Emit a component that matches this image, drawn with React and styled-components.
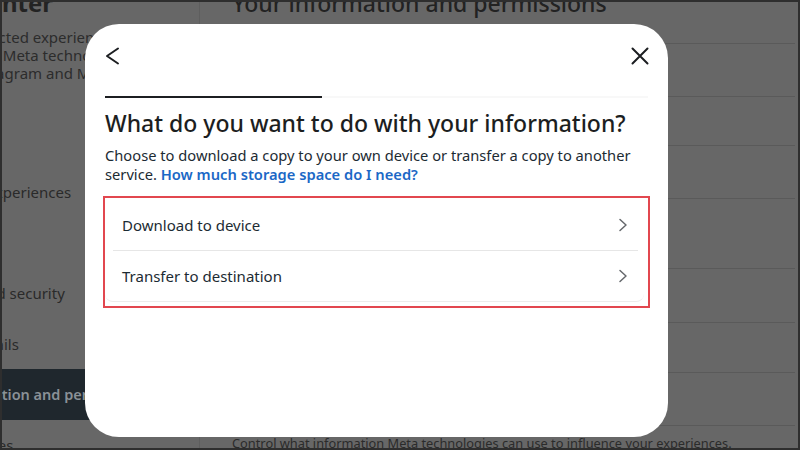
import React from "react";
import styled, { createGlobalStyle } from "styled-components";

const Global = createGlobalStyle`
  html, body { margin: 0; padding: 0; }
  body { width: 800px; height: 450px; overflow: hidden; font-family: "Noto Sans", "Open Sans", sans-serif; }
  * { box-sizing: border-box; }
`;

const Frame = styled.div`
  position: relative;
  width: 800px;
  height: 450px;
  overflow: hidden;
  background: #676767;
  border: 2px solid #2e2e2e;
`;

const Page = styled.div`
  display: grid;
  grid-template-columns: 198px 1fr;
  margin-top: -14px;
  color: #262626;
`;

const Sidebar = styled.aside`
  overflow: hidden;
  border-right: 1px solid #5e5e5e;
  height: 480px;
`;

const SideInner = styled.div`
  margin-left: -146px;
  width: 340px;
`;

const SideTitle = styled.h1`
  margin: 0;
  font-size: 24px;
  line-height: 30px;
  font-weight: 700;
  color: #232323;
`;

const SideDesc = styled.p`
  margin: 10px 0 0 38px;
  font-size: 15px;
  line-height: 18px;
  color: #2c2c2c;
  white-space: nowrap;
`;

const Menu = styled.nav`
  margin-top: 34px;
  display: flex;
  flex-direction: column;
`;

const MenuItem = styled.div`
  height: 50.6px;
  display: flex;
  align-items: center;
  padding-left: ${(p) => (p.$header ? "0" : p.$active ? "53px" : "51px")};
  font-size: ${(p) => (p.$header ? "13px" : p.$active ? "14.5px" : "15px")};
  font-weight: ${(p) => (p.$active ? 600 : p.$header ? 700 : 400)};
  background: ${(p) => (p.$active ? "#1f272d" : "transparent")};
  color: ${(p) => (p.$active ? "#8a9197" : "#2a2a2a")};
  white-space: nowrap;
`;

const Main = styled.main`
  padding: 0 3px 0 32px;
`;

const MainTitle = styled.h2`
  margin: 0;
  font-size: 23px;
  line-height: 30px;
  font-weight: 500;
  color: #222;
  white-space: nowrap;
`;

const List = styled.div`
  margin-top: 25px;
  border-top: 1px solid #5a5a5a;
  display: flex;
  flex-direction: column;
`;

const Row = styled.div`
  height: ${(p) => p.$h}px;
  border-bottom: 1px solid #5a5a5a;
  display: flex;
  align-items: center;
  padding-left: 16px;
  font-size: 15px;
  color: #2a2a2a;
`;

const Footnote = styled.p`
  margin: 8px 0 0;
  font-size: 12.8px;
  line-height: 18px;
  color: #2b2b2b;
  white-space: nowrap;
`;

const Modal = styled.div`
  position: absolute;
  left: 83px;
  top: 22px;
  width: 583px;
  height: 413px;
  background: #fff;
  border-radius: 34px;
  padding: 20px 20px;
  display: flex;
  flex-direction: column;
`;

const Header = styled.div`
  display: flex;
  justify-content: space-between;
  align-items: center;
  margin: 0 -4px;
  height: 24px;
`;

const IconButton = styled.button`
  width: 24px;
  height: 24px;
  padding: 0;
  border: 0;
  background: none;
  display: flex;
  color: #1c1e21;
`;

const Progress = styled.div`
  margin-top: 28px;
  height: 2px;
  background: #f8f8f8;
`;

const ProgressFill = styled.div`
  height: 100%;
  background: #1c1e21;
`;

const Heading = styled.h3`
  margin: 11px 0 0;
  font-size: 23px;
  line-height: 28px;
  font-weight: 500;
  color: #1c1e21;
  white-space: nowrap;
`;

const Description = styled.p`
  margin: 9px 0 0;
  font-size: 14.7px;
  line-height: 19px;
  color: #1c2b33;
`;

const Link = styled.a`
  color: #1b68c6;
  font-weight: 600;
  text-decoration: none;
`;

const Highlight = styled.div`
  margin: 12px -2px 0 -2px;
  border: 2px solid #e2474f;
  padding: 1px 4px 4px 0;
`;

const Card = styled.div`
  border-bottom: 1px solid #ececec;
  border-radius: 0 0 8px 8px;
  display: flex;
  flex-direction: column;
`;

const Option = styled.div`
  position: relative;
  height: 51px;
  display: flex;
  align-items: center;
  justify-content: space-between;
  padding: 0 16px 0 17px;
  font-size: 15px;
  color: #1c2b33;
  & + &::before {
    content: "";
    position: absolute;
    top: 0;
    left: 8px;
    right: 6px;
    height: 1px;
    background: #e6e6e6;
  }
`;

const Back = () => (
  <svg width="24" height="24" viewBox="0 0 24 24" fill="none">
    <path d="M17 4.5L6 12l11 7.5" stroke="currentColor" strokeWidth="2" strokeLinecap="round" strokeLinejoin="round" />
  </svg>
);

const Close = () => (
  <svg width="24" height="24" viewBox="0 0 24 24" fill="none">
    <path d="M4.5 4.5l15 15M19.5 4.5l-15 15" stroke="currentColor" strokeWidth="2" strokeLinecap="round" />
  </svg>
);

const Chevron = () => (
  <svg width="10" height="14" viewBox="0 0 10 14" fill="none">
    <path d="M2 1.5L8 7l-6 5.5" stroke="#65686c" strokeWidth="1.5" strokeLinecap="round" strokeLinejoin="round" />
  </svg>
);

const menu = [
  { label: "Profiles" },
  { label: "Connected experiences" },
  { label: "Account settings", header: true },
  { label: "Password and security" },
  { label: "Personal details" },
  { label: "Your information and permissions", active: true },
  { label: "Ad preferences" },
];

const rows = [
  { h: 53, label: "Access your information" },
  { h: 49, label: "Download your information" },
  { h: 53, label: "Transfer a copy of your information" },
  { h: 70, label: "Search history" },
  { h: 54, label: "Apps and websites off of Meta technologies" },
  { h: 50, label: "Manage contacts" },
  { h: 53, label: "Specific ways you can manage your information" },
];

export default function App() {
  return (
    <>
      <Global />
      <Frame>
        <Page>
          <Sidebar>
            <SideInner>
              <SideTitle>Accounts Center</SideTitle>
              <SideDesc>
                Manage connected experiences and account
                <br />
                settings across Meta technologies like
                <br />
                Facebook, Instagram and Meta Horizon.
              </SideDesc>
              <Menu>
                {menu.map((m) => (
                  <MenuItem key={m.label} $active={m.active} $header={m.header}>
                    {m.label}
                  </MenuItem>
                ))}
              </Menu>
            </SideInner>
          </Sidebar>
          <Main>
            <MainTitle>Your information and permissions</MainTitle>
            <List>
              {rows.map((r) => (
                <Row key={r.label} $h={r.h}>
                  {r.label}
                </Row>
              ))}
            </List>
            <Footnote>Control what information Meta technologies can use to influence your experiences.</Footnote>
          </Main>
        </Page>
        <Modal>
          <Header>
            <IconButton aria-label="Back">
              <Back />
            </IconButton>
            <IconButton aria-label="Close">
              <Close />
            </IconButton>
          </Header>
          <Progress>
            <ProgressFill style={{ width: "40%" }} />
          </Progress>
          <Heading>What do you want to do with your information?</Heading>
          <Description>
            Choose to download a copy to your own device or transfer a copy to another service.{" "}
            <Link href="#">How much storage space do I need?</Link>
          </Description>
          <Highlight>
            <Card>
              <Option>
                Download to device
                <Chevron />
              </Option>
              <Option>
                Transfer to destination
                <Chevron />
              </Option>
            </Card>
          </Highlight>
        </Modal>
      </Frame>
    </>
  );
}
